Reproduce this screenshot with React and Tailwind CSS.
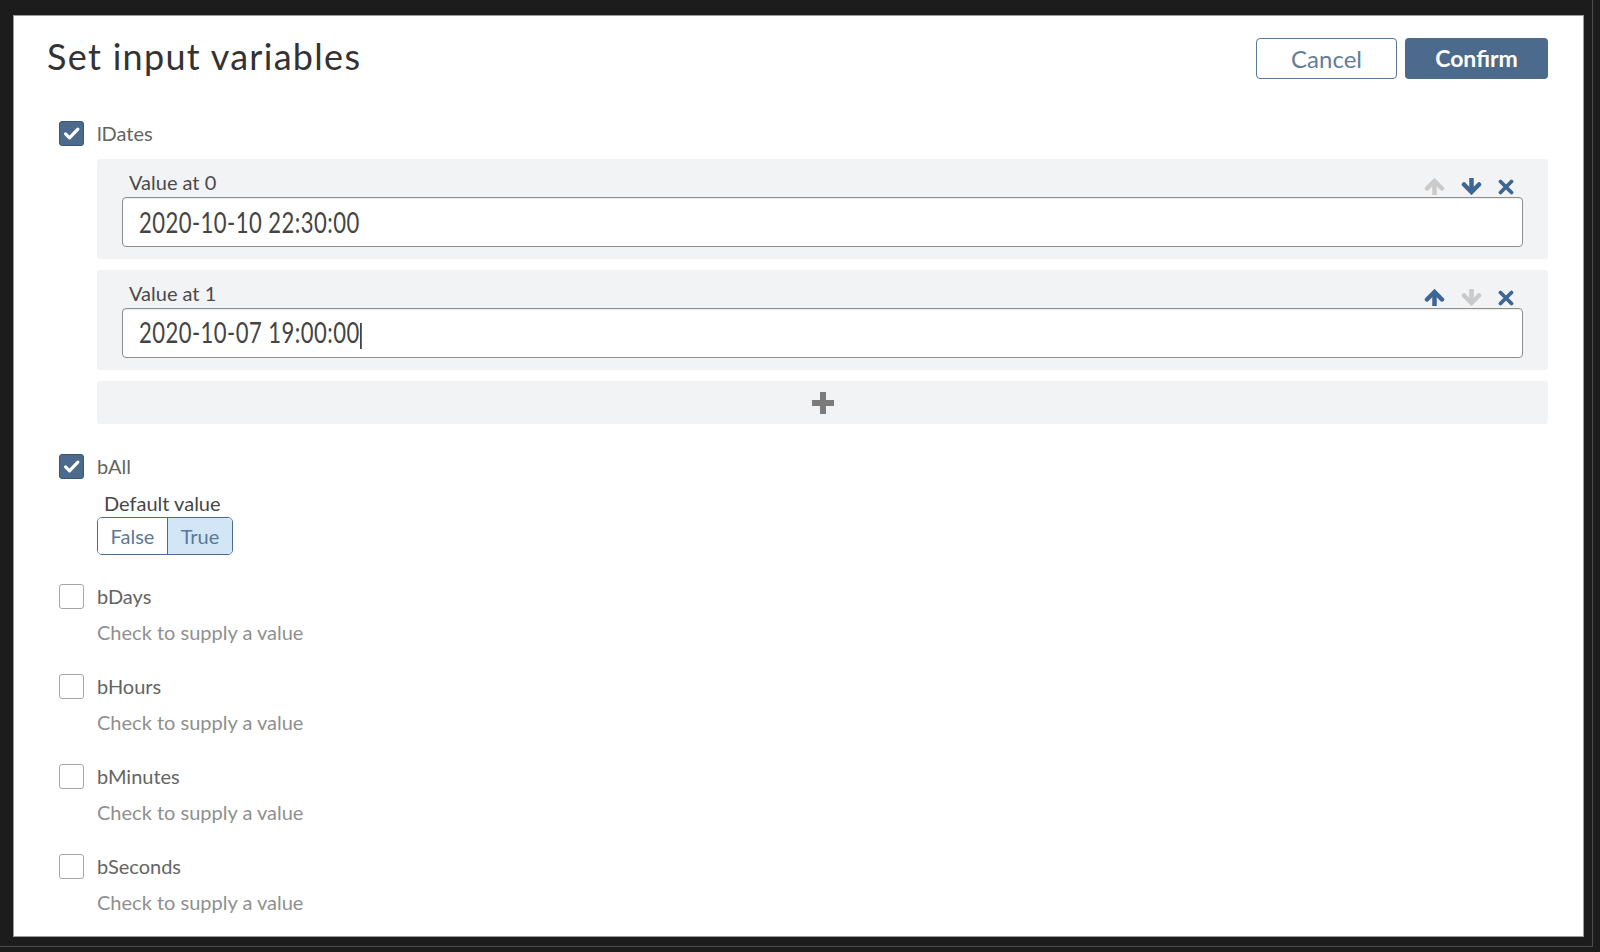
import React from 'react'

const font = { fontFamily: 'Lato, "Open Sans", sans-serif' }

function Checkbox({ checked }) {
  if (!checked) {
    return <div className="w-[25px] h-[25px] shrink-0 rounded-[3px] border border-[#a6a6a6] bg-white" />
  }
  return (
    <div className="w-[25px] h-[25px] shrink-0 rounded-[3px] border border-[#3d5676] bg-[#4c6a8c] flex items-center justify-center">
      <svg width="19" height="19" viewBox="0 0 24 24" fill="none">
        <path d="M4.5 12.5l5 5L20 6.5" stroke="#fff" strokeWidth="4" strokeLinecap="round" strokeLinejoin="round" />
      </svg>
    </div>
  )
}

function Arrow({ dir, disabled }) {
  const color = disabled ? '#cacaca' : '#3d6693'
  return (
    <svg width="21" height="17" viewBox="0 0 21 17" fill="none" className={dir === 'down' ? 'rotate-180' : ''}>
      <path d="M10.5 17V3.5" stroke={color} strokeWidth="4.5" />
      <path d="M3 10.5l7.5-7.5 7.5 7.5" stroke={color} strokeWidth="4.5" strokeLinecap="round" />
    </svg>
  )
}

function Cross() {
  return (
    <svg width="16" height="16" viewBox="0 0 16 16" fill="none">
      <path d="M2.5 2.5l11 11M13.5 2.5l-11 11" stroke="#3d6693" strokeWidth="3.8" strokeLinecap="round" />
    </svg>
  )
}

function ValueBox({ index, value, upDisabled, downDisabled, caret }) {
  return (
    <div className="bg-[#f2f3f5] rounded-[3px] px-[25px] pt-[11px] pb-[12px]">
      <div className="flex items-end justify-between pl-[7px] pr-[9px] h-[24px]">
        <span className="text-[20px] leading-[24px] text-[#4a4a4a]">Value at {index}</span>
        <div className="flex items-center gap-[16px] translate-y-[1px]">
          <Arrow dir="up" disabled={upDisabled} />
          <Arrow dir="down" disabled={downDisabled} />
          <Cross />
        </div>
      </div>
      <div className="mt-[3px] h-[50px] bg-white border border-[#8e8e8e] rounded-[4px] flex items-center pl-[16px] shadow-[inset_0_1px_1px_rgba(0,0,0,0.08)]">
        <span className="inline-block origin-left scale-x-[0.76] text-[29px] leading-[30px] tracking-[0.6px] text-[#444] whitespace-nowrap">
          {value}
          {caret && <span className="inline-block w-[2px] h-[26px] bg-[#222] align-middle ml-[1px]" />}
        </span>
      </div>
    </div>
  )
}

function EmptyVar({ name }) {
  return (
    <div className="mt-[29px]">
      <div className="flex items-center gap-[13px] h-[25px]">
        <Checkbox />
        <span className="text-[20px] leading-[25px] text-[#646464]">{name}</span>
      </div>
      <div className="mt-[11px] ml-[38px] text-[20px] leading-[25px] text-[#8f8f8f]">Check to supply a value</div>
    </div>
  )
}

export default function App() {
  return (
    <div className="w-[1600px] h-[952px] bg-[#1c1c1c] overflow-hidden" style={font}>
      <div className="w-[1593px] h-[947px] border-r border-b border-[#4d4d4d] pl-[13px] pt-[15px]">
        <div className="w-[1571px] h-[922px] bg-white border border-[#9c9c9c]">
          {/* Header */}
          <div className="flex items-start justify-between pl-[33px] pr-[35px] pt-[19px]">
            <h1 className="text-[36px] leading-[43px] tracking-[1.3px] text-[#333]">Set input variables</h1>
            <div className="flex gap-[8px] mt-[3px]">
              <button className="w-[141px] h-[41px] rounded-[4px] border border-[#5b7898] bg-white text-[24px] text-[#627d9b] leading-none">
                Cancel
              </button>
              <button className="w-[143px] h-[41px] rounded-[4px] bg-[#4c6a8c] text-[23px] font-bold text-white leading-none">
                Confirm
              </button>
            </div>
          </div>

          {/* Variables */}
          <div className="pl-[45px] pr-[35px]">
            <div className="mt-[42px] flex items-center gap-[13px] h-[25px]">
              <Checkbox checked />
              <span className="text-[20px] leading-[25px] text-[#646464]">lDates</span>
            </div>
            <div className="ml-[38px] mt-[13px] flex flex-col gap-[11px]">
              <ValueBox index={0} value="2020-10-10 22:30:00" upDisabled />
              <ValueBox index={1} value="2020-10-07 19:00:00" downDisabled caret />
              <div className="h-[43px] bg-[#f2f3f5] rounded-[3px] flex items-center justify-center">
                <svg width="26" height="26" viewBox="0 0 26 26" fill="none">
                  <path d="M13 2v22M2 13h22" stroke="#7b7b7b" strokeWidth="6" />
                </svg>
              </div>
            </div>

            <div className="mt-[30px] flex items-center gap-[13px] h-[25px]">
              <Checkbox checked />
              <span className="text-[20px] leading-[25px] text-[#646464]">bAll</span>
            </div>
            <div className="ml-[38px]">
              <div className="mt-[12px] ml-[7px] text-[20px] leading-[24px] text-[#464646]">Default value</div>
              <div className="mt-[2px] flex w-[136px] h-[38px] rounded-[5px] border border-[#4c6a8c] overflow-hidden text-[20px] text-[#5b7898]">
                <div className="w-[70px] flex items-center justify-center border-r border-[#4c6a8c] bg-white">False</div>
                <div className="flex-1 flex items-center justify-center bg-[#d3e6f6]">True</div>
              </div>
            </div>

            <EmptyVar name="bDays" />
            <EmptyVar name="bHours" />
            <EmptyVar name="bMinutes" />
            <EmptyVar name="bSeconds" />
          </div>
        </div>
      </div>
    </div>
  )
}
